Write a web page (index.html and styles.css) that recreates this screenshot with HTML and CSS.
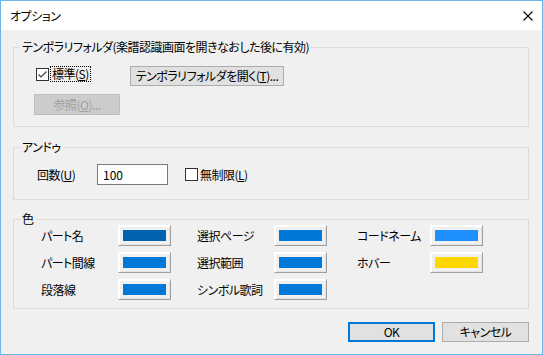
FILE: index.html
```html
<!DOCTYPE html>
<html lang="ja">
<head>
  <meta charset="UTF-8">
  <title>オプション</title>
  <link rel="stylesheet" href="styles.css">
</head>
<body>

  <div class="window">
    <div class="titlebar">
      <span class="title">オプション</span>
      <span class="close">
        <svg width="10" height="10" viewBox="0 0 10 10"><path d="M0.5 0.5 L9.5 9.5 M9.5 0.5 L0.5 9.5" stroke="#000" stroke-width="1.1" fill="none"/></svg>
      </span>
    </div>

    <div class="conteudo">
      <fieldset class="grupo grupo-temp">
        <legend>テンポラリフォルダ(楽譜認識画面を開きなおした後に有効)</legend>
        <div class="linha-temp">
          <label class="check check-padrao">
            <span class="caixa">
              <svg width="11" height="11" viewBox="0 0 11 11"><path d="M1.5 5.5 L4 8 L9.5 2.5" stroke="#444" stroke-width="1.2" fill="none"/></svg>
            </span>
            <span class="foco">標準(<u>S</u>)</span>
          </label>
          <button class="btn btn-abrir">テンポラリフォルダを開く(<u>T</u>)...</button>
        </div>
        <button class="btn btn-ref" disabled>参照(<u>O</u>)...</button>
      </fieldset>

      <fieldset class="grupo grupo-undo">
        <legend>アンドゥ</legend>
        <div class="linha-undo">
          <span class="rotulo">回数(<u>U</u>)</span>
          <input class="campo" type="text" value="100">
          <label class="check check-ilimitado">
            <span class="caixa"></span>
            <span>無制限(<u>L</u>)</span>
          </label>
        </div>
      </fieldset>

      <fieldset class="grupo grupo-cor">
        <legend>色</legend>
        <div class="cores">
          <span>パート名</span>
          <span class="cor-btn"><span class="amostra" style="background:#0063b1"></span></span>
          <span>選択ページ</span>
          <span class="cor-btn"><span class="amostra" style="background:#0078d7"></span></span>
          <span>コードネーム</span>
          <span class="cor-btn"><span class="amostra" style="background:#1e90ff"></span></span>

          <span>パート間線</span>
          <span class="cor-btn"><span class="amostra" style="background:#0078d7"></span></span>
          <span>選択範囲</span>
          <span class="cor-btn"><span class="amostra" style="background:#0078d7"></span></span>
          <span>ホバー</span>
          <span class="cor-btn"><span class="amostra" style="background:#ffd700"></span></span>

          <span>段落線</span>
          <span class="cor-btn"><span class="amostra" style="background:#0078d7"></span></span>
          <span>シンボル歌詞</span>
          <span class="cor-btn"><span class="amostra" style="background:#0078d7"></span></span>
        </div>
      </fieldset>

      <div class="rodape">
        <button class="btn btn-ok">OK</button>
        <button class="btn btn-rodape">キャンセル</button>
      </div>
    </div>
  </div>

</body>
</html>
```

FILE: styles.css
```css
* {
  box-sizing: border-box;
  margin: 0;
  padding: 0;
}

body {
  font-family: "Noto Sans CJK JP", "Noto Sans", sans-serif;
  font-size: 12px;
  font-feature-settings: "palt";
  letter-spacing: -0.5px;
  color: #000;
  background: #f0f0f0;
}

.window {
  width: 543px;
  height: 355px;
  border: 1px solid #6cb8ea;
  background: #f0f0f0;
  overflow: hidden;
}

.titlebar {
  height: 29px;
  background: #fff;
  display: flex;
  align-items: center;
  padding-left: 9px;
  padding-right: 9px;
}

.title {
  flex: 1;
  line-height: 14px;
}

.close {
  display: flex;
  width: 10px;
  height: 10px;
}

.conteudo {
  padding: 10px 13px 0 12px;
}

.grupo {
  border: 1px solid #dcdcdc;
  min-inline-size: 0;
}

.grupo legend {
  margin-left: 6px;
  padding: 0 2px;
  line-height: 14px;
}

/* temporaria */
.grupo-temp {
  padding-bottom: 11px;
}

.linha-temp {
  display: flex;
  align-items: flex-start;
  margin-top: 12px;
  padding-left: 22px;
}

.check {
  display: flex;
  align-items: center;
  line-height: 14px;
}

.check-padrao {
  width: 94px;
  margin-top: 1px;
}

.caixa {
  width: 13px;
  height: 13px;
  border: 1px solid #333;
  background: #fff;
  display: flex;
  margin-right: 2px;
}

.foco {
  outline: 1px dotted #000;
  padding: 0 1px;
}

.btn {
  font: inherit;
  font-feature-settings: "palt";
  letter-spacing: -0.5px;
  background: #e1e1e1;
  border: 1px solid #adadad;
  color: #000;
  height: 20px;
  line-height: 16px;
}

.btn-abrir {
  width: 154px;
}

.btn-ref {
  display: block;
  width: 86px;
  height: 21px;
  margin: 8px 0 0 20px;
  background: #cccccc;
  border-color: #bfbfbf;
  color: #a0a0a0;
}

/* undo */
.grupo-undo {
  margin-top: 13px;
  padding-bottom: 14px;
}

.linha-undo {
  display: flex;
  align-items: center;
  margin-top: 10px;
  padding-left: 23px;
  height: 21px;
}

.rotulo {
  width: 60px;
}

.campo {
  font: inherit;
  letter-spacing: 0;
  width: 71px;
  height: 21px;
  border: 1px solid #7a7a7a;
  background: #fff;
  padding-left: 5px;
  outline: none;
}

.check-ilimitado {
  margin-left: 17px;
}

/* cores */
.grupo-cor {
  margin-top: 12px;
  padding-bottom: 8px;
}

.cores {
  display: grid;
  grid-template-columns: 77px 79px 77px 83px 73px 53px;
  grid-auto-rows: 21px;
  row-gap: 6px;
  align-items: center;
  margin-top: -1px;
  padding-left: 27px;
}

.cor-btn {
  display: block;
  width: 53px;
  height: 21px;
  padding: 4px;
  border: 1px solid;
  border-color: #fff #a0a0a0 #a0a0a0 #fff;
  box-shadow: inset 1px 1px #fff, inset -1px -1px #e3e3e3;
  background: #f0f0f0;
}

.amostra {
  display: block;
  width: 100%;
  height: 100%;
}

/* rodape */
.rodape {
  display: flex;
  justify-content: flex-end;
  gap: 7px;
  margin-top: 13px;
}

.rodape .btn {
  width: 87px;
}

.btn-ok {
  border: 2px solid #0078d7;
}
```
